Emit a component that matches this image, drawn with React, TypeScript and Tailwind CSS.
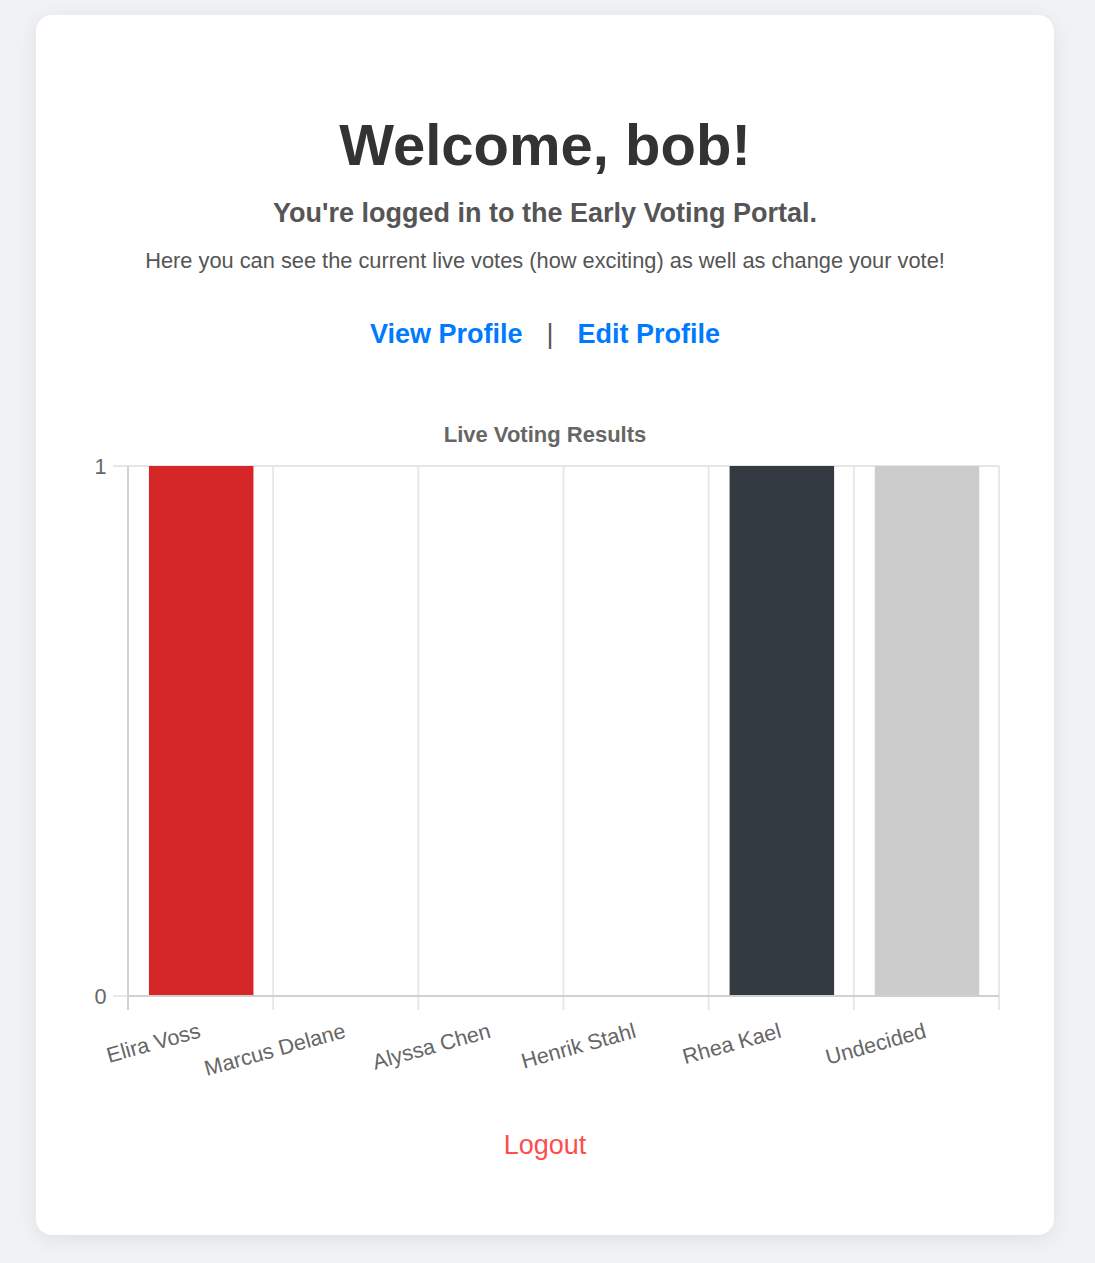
import React from "react"

const CANDIDATES = [
  { name: "Elira Voss", votes: 1, color: "#d62728" },
  { name: "Marcus Delane", votes: 0, color: "#1f77b4" },
  { name: "Alyssa Chen", votes: 0, color: "#2ca02c" },
  { name: "Henrik Stahl", votes: 0, color: "#ff7f0e" },
  { name: "Rhea Kael", votes: 1, color: "#343a42" },
  { name: "Undecided", votes: 1, color: "#cccccc" },
]

// plot area inside the svg
const X0 = 42
const X1 = 913
const Y0 = 51
const Y1 = 581
const STEP = (X1 - X0) / CANDIDATES.length
const BAR_W = STEP * 0.72
const MAX = 1

function VotingChart() {
  return (
    <svg width={918} height={670} className="block mx-auto overflow-visible" style={{ fontFamily: "'Liberation Sans', Arial, sans-serif" }}>
      <text x={459} y={19} textAnchor="middle" dominantBaseline="central" fontSize={22} fontWeight={700} fill="#666">
        Live Voting Results
      </text>

      {/* vertical grid */}
      {CANDIDATES.map((_, i) => (
        <line key={i} x1={X0 + i * STEP} y1={Y0} x2={X0 + i * STEP} y2={Y1 + 14} stroke="#e6e6e6" strokeWidth={1.8} />
      ))}
      <line x1={X1} y1={Y0} x2={X1} y2={Y1 + 14} stroke="#e6e6e6" strokeWidth={1.8} />

      {/* horizontal grid */}
      <line x1={X0 - 15} y1={Y0} x2={X1} y2={Y0} stroke="#e6e6e6" strokeWidth={1.8} />
      <line x1={X0 - 15} y1={Y1} x2={X0} y2={Y1} stroke="#e6e6e6" strokeWidth={1.8} />

      {/* bars */}
      {CANDIDATES.map((c, i) => {
        const h = ((Y1 - Y0) * c.votes) / MAX
        if (!h) return null
        const cx = X0 + (i + 0.5) * STEP + 0.6
        return <rect key={c.name} x={cx - BAR_W / 2} y={Y1 - h} width={BAR_W} height={h} fill={c.color} />
      })}

      {/* axes */}
      <line x1={X0} y1={Y0} x2={X0} y2={Y1 + 14} stroke="#d0d0d0" strokeWidth={1.8} />
      <line x1={X0} y1={Y1} x2={X1} y2={Y1} stroke="#d0d0d0" strokeWidth={1.8} />

      {/* y ticks */}
      <text x={20.5} y={Y0} textAnchor="end" dominantBaseline="central" fontSize={21.6} fill="#666">1</text>
      <text x={20.5} y={Y1} textAnchor="end" dominantBaseline="central" fontSize={21.6} fill="#666">0</text>

      {/* x ticks */}
      {CANDIDATES.map((c, i) => {
        const cx = X0 + (i + 0.5) * STEP - 1
        return (
          <text
            key={c.name}
            transform={`translate(${cx} 615) rotate(-15.5)`}
            textAnchor="end"
            dominantBaseline="central"
            fontSize={21.6}
            fill="#666"
          >
            {c.name}
          </text>
        )
      })}
    </svg>
  )
}

export default function App() {
  return (
    <div className="min-h-screen bg-[#f0f2f5] pt-[15px] pb-[30px]" style={{ fontFamily: "'Liberation Sans', Arial, sans-serif" }}>
      <div className="ml-[36px] w-[1018px] bg-white rounded-[16px] shadow-[0_4px_20px_rgba(0,0,0,0.08)] pt-[101px] pb-[74px] text-center">
        <h1 className="text-[58px] leading-none font-bold text-[#333]">Welcome, bob!</h1>
        <h2 className="mt-[26px] text-[27px] leading-none font-bold text-[#555]">You're logged in to the Early Voting Portal.</h2>
        <p className="mt-[23px] text-[21.8px] leading-none text-[#555]">
          Here you can see the current live votes (how exciting) as well as change your vote!
        </p>

        <div className="mt-[49px] flex justify-center items-center gap-[24px] text-[27px] leading-none">
          <a href="#" className="font-bold text-[#007bff]">View Profile</a>
          <span className="text-[#555]">|</span>
          <a href="#" className="font-bold text-[#007bff]">Edit Profile</a>
        </div>

        <div className="mt-[67px]">
          <VotingChart />
        </div>

        <a href="#" className="inline-block mt-[47px] text-[27px] leading-none text-[#ff4d4d]">Logout</a>
      </div>
    </div>
  )
}
